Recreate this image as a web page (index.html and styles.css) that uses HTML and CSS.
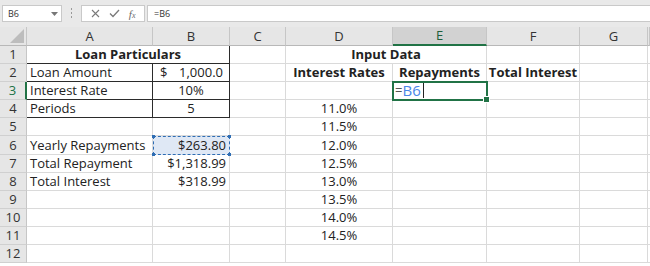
FILE: index.html
```html
<!DOCTYPE html>
<html>
<head>
<meta charset="utf-8">
<link rel="stylesheet" href="styles.css">
</head>
<body>
<div class="toolbar">
  <div class="namebox"><span>B6</span><svg class="dd" width="7" height="4" viewBox="0 0 7 4"><path d="M0 0H7L3.5 4Z" fill="#777"/></svg></div>
  <div class="grip"><i></i><i></i><i></i></div>
  <div class="btns">
    <svg width="9" height="9" viewBox="0 0 9 9"><path d="M1 1L8 8M8 1L1 8" stroke="#7a7a7a" stroke-width="1.1" fill="none"/></svg>
    <svg width="11" height="9" viewBox="0 0 11 9"><path d="M1 4.5L4 7.5L10 1" stroke="#7a7a7a" stroke-width="1.3" fill="none"/></svg>
    <span class="fx">f<small>x</small></span>
  </div>
  <div class="formula">=B6</div>
</div>
<div class="sheet">
  <div class="corner"><svg width="14" height="14" viewBox="0 0 14 14"><path d="M14 0V14H0Z" fill="#bdbdbd"/></svg></div>
  <div class="ch">A</div><div class="ch">B</div><div class="ch">C</div><div class="ch">D</div><div class="ch sel">E</div><div class="ch">F</div><div class="ch">G</div><div class="ch"></div>

  <div class="rh">1</div>
  <div class="c span2 b c-b k-r k-b">Loan Particulars</div>
  <div class="c"></div>
  <div class="c span2 b c-b">Input Data</div>
  <div class="c"></div><div class="c"></div><div class="c"></div>

  <div class="rh">2</div>
  <div class="c k-r k-b">Loan Amount</div>
  <div class="c acct k-r k-b"><span>$</span><span>1,000.0</span></div>
  <div class="c"></div>
  <div class="c b c-b">Interest Rates</div>
  <div class="c b c-b">Repayments</div>
  <div class="c b c-b">Total Interest</div>
  <div class="c"></div><div class="c"></div>

  <div class="rh rsel">3</div>
  <div class="c k-r k-b">Interest Rate</div>
  <div class="c c-b k-r k-b">10%</div>
  <div class="c"></div>
  <div class="c"></div>
  <div class="c active"><span class="eq">=</span><span class="ref">B6</span><span class="caret"></span></div>
  <div class="c"></div><div class="c"></div><div class="c"></div>

  <div class="rh">4</div>
  <div class="c k-r k-b">Periods</div>
  <div class="c c-b k-r k-b">5</div>
  <div class="c"></div>
  <div class="c c-b">11.0%</div>
  <div class="c"></div><div class="c"></div><div class="c"></div><div class="c"></div>

  <div class="rh">5</div>
  <div class="c"></div><div class="c"></div><div class="c"></div>
  <div class="c c-b">11.5%</div>
  <div class="c"></div><div class="c"></div><div class="c"></div><div class="c"></div>

  <div class="rh">6</div>
  <div class="c">Yearly Repayments</div>
  <div class="c r refcell">$263.80<i class="h h1"></i><i class="h h2"></i><i class="h h3"></i><i class="h h4"></i></div>
  <div class="c"></div>
  <div class="c c-b">12.0%</div>
  <div class="c"></div><div class="c"></div><div class="c"></div><div class="c"></div>

  <div class="rh">7</div>
  <div class="c">Total Repayment</div>
  <div class="c r">$1,318.99</div>
  <div class="c"></div>
  <div class="c c-b">12.5%</div>
  <div class="c"></div><div class="c"></div><div class="c"></div><div class="c"></div>

  <div class="rh">8</div>
  <div class="c">Total Interest</div>
  <div class="c r">$318.99</div>
  <div class="c"></div>
  <div class="c c-b">13.0%</div>
  <div class="c"></div><div class="c"></div><div class="c"></div><div class="c"></div>

  <div class="rh">9</div>
  <div class="c"></div><div class="c"></div><div class="c"></div>
  <div class="c c-b">13.5%</div>
  <div class="c"></div><div class="c"></div><div class="c"></div><div class="c"></div>

  <div class="rh">10</div>
  <div class="c"></div><div class="c"></div><div class="c"></div>
  <div class="c c-b">14.0%</div>
  <div class="c"></div><div class="c"></div><div class="c"></div><div class="c"></div>

  <div class="rh">11</div>
  <div class="c"></div><div class="c"></div><div class="c"></div>
  <div class="c c-b">14.5%</div>
  <div class="c"></div><div class="c"></div><div class="c"></div><div class="c"></div>

  <div class="rh">12</div>
  <div class="c"></div><div class="c"></div><div class="c"></div><div class="c"></div>
  <div class="c"></div><div class="c"></div><div class="c"></div><div class="c"></div>
</div>
</body>
</html>
```

FILE: styles.css
```css
html, body { margin: 0; padding: 0; background: #fff; overflow: hidden; }
body { font-family: "Open Sans", "Liberation Sans", sans-serif; color: #222; width: 650px; height: 266px; }

.toolbar {
  height: 27px; box-sizing: border-box; background: #e9e9e9;
  display: flex; align-items: flex-start; padding-top: 5px;
}
.namebox {
  margin-left: 2px; width: 60px; height: 17px; box-sizing: border-box;
  background: #fff; border: 1px solid #c9c9c9;
  display: flex; align-items: center; justify-content: space-between;
  padding: 0 3px 0 5px; font-size: 9px; color: #333;
}
.grip { width: 19px; display: flex; flex-direction: column; align-items: center; gap: 2px; padding-top: 3px; }
.grip i { display: block; width: 1px; height: 2px; background: #9a9a9a; }
.btns {
  width: 64px; height: 17px; box-sizing: border-box; background: #fff; border: 1px solid #c9c9c9;
  display: flex; align-items: center; justify-content: space-around; padding: 0 4px;
}
.fx { font-family: "Liberation Serif", serif; font-style: italic; font-size: 11px; color: #6a6a6a; }
.fx small { font-size: 8px; }
.formula {
  margin-left: 2px; flex: 1; height: 17px; box-sizing: border-box; background: #fff;
  border: 1px solid #c9c9c9; border-right: none; font-size: 9px; color: #333;
  display: flex; align-items: center; padding-left: 6px;
}

.sheet {
  display: grid;
  grid-template-columns: 27px 126px 77px 56px 107px 94px 93px 68px 2px;
  grid-template-rows: 19px repeat(12, 18.1px);
  font-size: 13px;
}
.corner { background: #e6e6e6; border-right: 1px solid #c6c6c6; border-bottom: 1px solid #b8b8b8; box-sizing: border-box; display: flex; align-items: flex-end; justify-content: flex-end; padding: 0 2px 2px 0; }
.ch {
  background: #e6e6e6; border-right: 1px solid #c6c6c6; border-bottom: 1px solid #b8b8b8;
  box-sizing: border-box; display: flex; align-items: center; justify-content: center;
  font-size: 13px; color: #333; line-height: 1;
}
.ch.sel { background: #d2d2d2; border-bottom: 2px solid #217346; color: #1e5e3a; }
.rh {
  background: #e6e6e6; border-right: 1px solid #c6c6c6; border-bottom: 1px solid #d0d0d0;
  box-sizing: border-box; display: flex; align-items: center; justify-content: center;
  font-size: 13px; color: #333; line-height: 1;
}
.rh.rsel { border-right: 2px solid #217346; color: #217346; }

.c {
  box-sizing: border-box; border-right: 1px solid #dadada; border-bottom: 1px solid #dadada;
  display: flex; align-items: center; padding: 0 3px; white-space: nowrap; line-height: 1;
  position: relative;
}
.span2 { grid-column: span 2; }
.b { font-weight: bold; }
.c-b { justify-content: center; overflow: visible; }
.r { justify-content: flex-end; }
.acct { justify-content: space-between; padding: 0 6px 0 7px; }
.k-r { border-right-color: #2b2b2b; }
.k-b { border-bottom-color: #2b2b2b; }

.active { outline: 2px solid #217346; outline-offset: -1px; z-index: 2; padding-left: 2px; font-size: 15px; }
.active::after {
  content: ""; position: absolute; right: -4px; bottom: -4px; width: 5px; height: 5px;
  background: #217346; border: 1px solid #fff;
}
.eq { color: #555; font-size: 13px; }
.ref { color: #4a86e8; }
.caret { display: inline-block; width: 1px; height: 15px; background: #222; margin-left: 2px; }

.refcell {
  background: #dfe8f5; border: 1px dashed #2e6db4; z-index: 1;
}
.h { position: absolute; width: 3px; height: 3px; background: #2e6db4; }
.h1 { left: -2px; top: -2px; }
.h2 { right: -2px; top: -2px; }
.h3 { left: -2px; bottom: -2px; }
.h4 { right: -2px; bottom: -2px; }
```
